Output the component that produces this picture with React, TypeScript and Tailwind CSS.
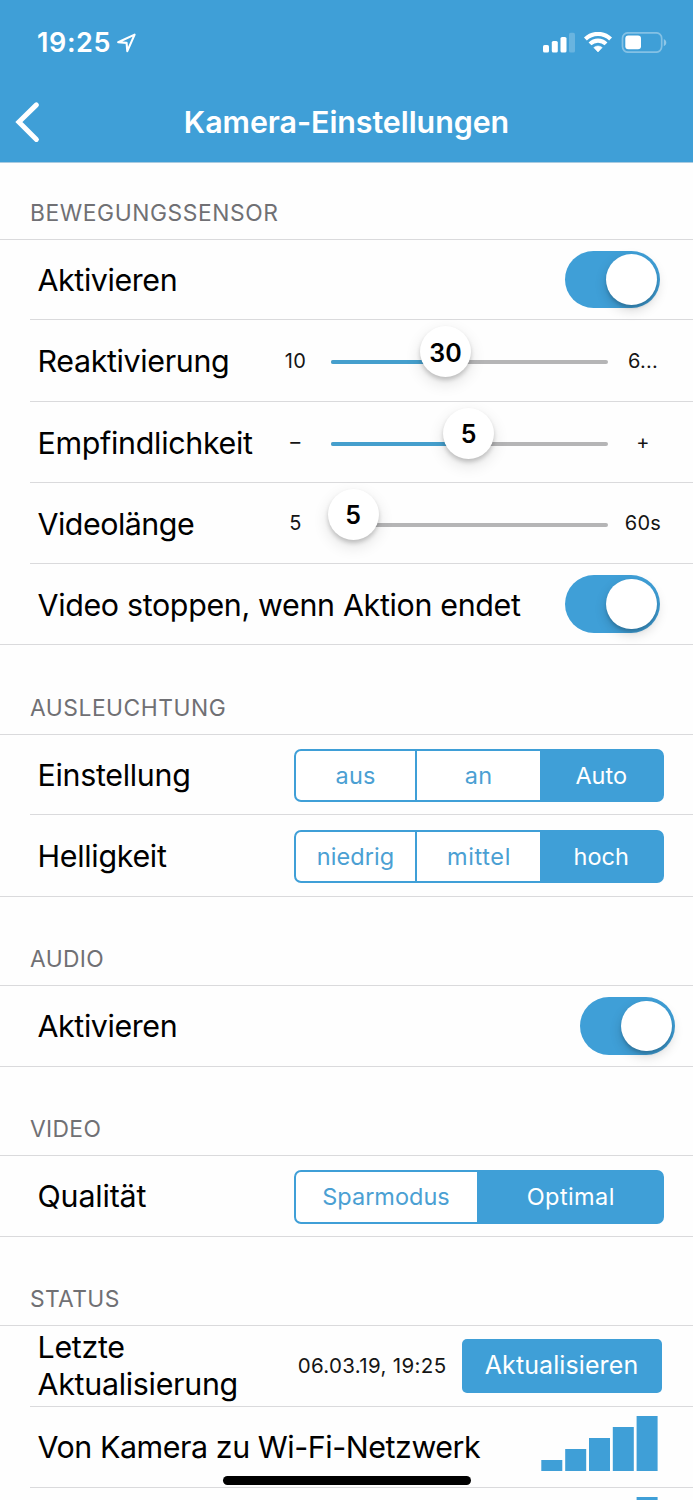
import type { ReactNode } from "react";

function StatusBar() {
  return (
    <div className="flex h-[83px] items-center pl-[37px] pr-[26px] pt-[2px]">
      <span className="text-[27px] font-[560] leading-8 tracking-[0.6px]">19:25</span>
      <svg className="ml-[6px] h-[20px] w-[20px]" viewBox="0 0 20 20" fill="none" stroke="currentColor" strokeWidth="2.1" strokeLinejoin="round">
        <path d="M1.2 9.3 17.6 1.6 10.3 18.2 9.6 9.9Z" />
      </svg>
      <svg className="ml-auto h-[21px] w-[124px]" viewBox="0 0 124 21" fill="currentColor">
        <rect x="0" y="13" width="6" height="7.5" rx="1.6" />
        <rect x="8.8" y="9" width="6" height="11.5" rx="1.6" />
        <rect x="17.5" y="5" width="6" height="15.5" rx="1.6" />
        <rect x="26" y="0.8" width="6" height="19.7" rx="1.6" opacity="0.22" />
        <g fill="none" stroke="currentColor" strokeWidth="4.1">
          <path d="M42.4 7a18 18 0 0 1 25.2 0" />
          <path d="M47 11.9a11.4 11.4 0 0 1 16 0" />
        </g>
        <path d="M50.8 15.6a6.3 6.3 0 0 1 8.4 0L55 20Z" strokeLinejoin="round" stroke="currentColor" strokeWidth="0.6" />
        <rect x="79.5" y="0.8" width="39.2" height="19.4" rx="5.6" fill="none" stroke="currentColor" strokeWidth="1.7" opacity="0.36" />
        <rect x="82.3" y="3.6" width="15.7" height="13.6" rx="3" />
        <path d="M120.8 7v7.2c1.6-.7 2.5-2 2.5-3.6s-.9-2.9-2.5-3.6Z" opacity="0.42" />
      </svg>
    </div>
  );
}

function Header() {
  return (
    <header className="h-[163px] border-b border-[#a9cbe1] bg-[#3f9fd7] text-white">
      <StatusBar />
      <div className="grid h-[78px] grid-cols-[60px_1fr_60px] items-center">
        <svg className="ml-[14px] h-[42px] w-[28px]" viewBox="0 0 28 42" fill="none" stroke="currentColor" strokeWidth="5" strokeLinecap="round">
          <path d="M22.4 3.9 4.9 21 22.4 38.4" />
        </svg>
        <h1 className="text-center text-[30.4px] font-[560] leading-9 tracking-[-0.05px]">Kamera-Einstellungen</h1>
      </div>
    </header>
  );
}

function SectionTitle({ className, children }: { className: string; children: ReactNode }) {
  return (
    <h2 className={`flex items-end border-b border-[#dadadc] pb-[14px] pl-[30px] text-[22.8px] leading-6 text-[#707074] ${className}`}>
      {children}
    </h2>
  );
}

function Row({ className, last, children }: { className: string; last?: boolean; children: ReactNode }) {
  return (
    <div className={`flex items-center border-b border-[#dadadc] ${last ? "pl-[37.5px]" : "ml-[30px] pl-[7.5px]"} ${className}`}>
      {children}
    </div>
  );
}

function Label({ className, children }: { className: string; children: ReactNode }) {
  return <span className={`shrink-0 whitespace-nowrap text-[30.4px] leading-[37px] ${className}`}>{children}</span>;
}

function Switch({ className }: { className: string }) {
  return (
    <button role="switch" aria-checked="true" className={`ml-auto flex h-[57.5px] w-[94.5px] shrink-0 items-center justify-end rounded-full bg-[#3f9fd7] pr-[3px] ${className}`}>
      <span className="size-[50.5px] rounded-full bg-white shadow-[0_5px_12px_rgba(0,0,0,0.17),0_3px_3px_rgba(0,0,0,0.14)]" />
    </button>
  );
}

function Slider({ min, max, value, left }: { min: string; max: string; value: string; left: number }) {
  return (
    <div className="ml-auto flex w-[395px] shrink-0 items-center pr-[14px] text-[20px] text-[#151515]">
      <span className="w-[24px] -translate-x-[14.6px] text-center tracking-[0.2px]">{min}</span>
      <div className="relative ml-[9px] mt-[3px] h-[4px] w-[277px] rounded-full bg-[#b5b5b6]">
        <div className="h-full rounded-full bg-[#459fcd]" style={{ width: left > 0 ? left + 20 : 0 }} />
        <div
          className="absolute -top-[34px] flex size-[51px] items-center justify-center rounded-full bg-white pt-[4px] text-[25px] font-semibold text-black shadow-[0_6px_16px_rgba(0,0,0,0.12),0_3px_4px_rgba(0,0,0,0.18)]"
          style={{ left }}
        >
          {value}
        </div>
      </div>
      <span className="ml-[14px] w-[42px] text-center tracking-[0.3px]">{max}</span>
    </div>
  );
}

function Segments({ items, active, columns }: { items: [string, string][]; active: number; columns: string }) {
  return (
    <div className={`ml-auto mr-[29.5px] mt-[2px] grid h-[53.5px] w-[369.5px] shrink-0 overflow-hidden rounded-[7px] border-2 border-[#3f9fd7] bg-[#3f9fd7] text-[23.5px] text-[#4ba0d3] ${columns}`}>
      {items.map(([text, spacing], i) => (
        <button
          key={text}
          className={`flex items-center justify-center ${spacing} ${i === active ? "text-white" : i + 1 < active ? "border-r-2 border-[#3f9fd7] bg-white" : "bg-white"}`}
        >
          {text}
        </button>
      ))}
    </div>
  );
}

function SignalBars() {
  return (
    <svg className="ml-auto mr-[35px] h-[55px] w-[117px] shrink-0" viewBox="0 0 117 55" fill="#3f9fd7">
      <rect x="0.3" y="44" width="21" height="11" />
      <rect x="24.2" y="33" width="21" height="22" />
      <rect x="48" y="22" width="21" height="33" />
      <rect x="71.8" y="11" width="21" height="44" />
      <rect x="95.6" y="0" width="21" height="55" />
    </svg>
  );
}

export default function App() {
  return (
    <div className="relative h-[1500px] w-[693px] overflow-hidden bg-[#fefefe] font-['Inter',sans-serif] text-black">
      <Header />

      <SectionTitle className="h-[77px] tracking-[0.58px]">BEWEGUNGSSENSOR</SectionTitle>
      <Row className="h-[80px]">
        <Label className="pt-[2px] tracking-[-0.4px]">Aktivieren</Label>
        <Switch className="mr-[33.5px]" />
      </Row>
      <Row className="h-[82px]">
        <Label className="pt-[2px] tracking-[-0.35px]">Reaktivierung</Label>
        <Slider min="10" max="6..." value="30" left={89} />
      </Row>
      <Row className="h-[81px]">
        <Label className="pt-[2px] tracking-[-0.3px]">Empfindlichkeit</Label>
        <Slider min="–" max="+" value="5" left={112} />
      </Row>
      <Row className="h-[81px]">
        <Label className="pt-[2px] tracking-[-0.5px]">Videolänge</Label>
        <Slider min="5" max="60s" value="5" left={-3.5} />
      </Row>
      <Row className="h-[81px]" last>
        <Label className="pt-[2px] tracking-[-0.33px]">Video stoppen, wenn Aktion endet</Label>
        <Switch className="mr-[33.5px]" />
      </Row>

      <SectionTitle className="h-[90px] tracking-[0.53px]">AUSLEUCHTUNG</SectionTitle>
      <Row className="h-[80px]">
        <Label className="pt-[2px] tracking-[-0.3px]">Einstellung</Label>
        <Segments
          items={[["aus", "tracking-[0.1px]"], ["an", "tracking-[0.3px]"], ["Auto", "tracking-[0px] pl-px"]]}
          active={2}
          columns="grid-cols-[121px_123px_1fr]"
        />
      </Row>
      <Row className="h-[82px]" last>
        <Label className="pt-[2px] tracking-[-0.3px]">Helligkeit</Label>
        <Segments
          items={[["niedrig", "tracking-[0.1px]"], ["mittel", "tracking-[0.6px] pl-px"], ["hoch", "tracking-[0px] pl-px"]]}
          active={2}
          columns="grid-cols-[121px_123px_1fr]"
        />
      </Row>

      <SectionTitle className="h-[89px] tracking-[0.35px]">AUDIO</SectionTitle>
      <Row className="h-[81px]" last>
        <Label className="tracking-[-0.4px]">Aktivieren</Label>
        <Switch className="mr-[18.5px]" />
      </Row>

      <SectionTitle className="h-[89px] tracking-[0.35px]">VIDEO</SectionTitle>
      <Row className="h-[81px]" last>
        <Label className="tracking-[-0.16px]">Qualität</Label>
        <Segments
          items={[["Sparmodus", "tracking-[0px] pr-px"], ["Optimal", "tracking-[0.4px] pl-[3px]"]]}
          active={1}
          columns="grid-cols-[181px_1fr]"
        />
      </Row>

      <SectionTitle className="h-[89px] tracking-[0.35px]">STATUS</SectionTitle>
      <Row className="h-[81px]">
        <Label className="tracking-[-0.29px]">
          Letzte
          <br />
          Aktualisierung
        </Label>
        <span className="ml-auto whitespace-nowrap text-[20.5px] tracking-[0.34px] text-[#151515]">06.03.19, 19:25</span>
        <button className="ml-[15px] mr-[31.5px] flex h-[53.5px] w-[200px] items-center justify-center rounded-[5px] bg-[#3f9fd7] text-[25px] tracking-[0.1px] text-white">
          Aktualisieren
        </button>
      </Row>
      <Row className="h-[81px]">
        <Label className="pt-px tracking-[-0.43px]">Von Kamera zu Wi-Fi-Netzwerk</Label>
        <div className="-mt-[7px] ml-auto flex">
          <SignalBars />
        </div>
      </Row>
      <Row className="h-[81px] !items-start pt-[9px]">
        <SignalBars />
      </Row>

      <div className="absolute left-[223px] top-[1475.5px] h-[9.5px] w-[247.5px] rounded-full bg-black" />
    </div>
  );
}
